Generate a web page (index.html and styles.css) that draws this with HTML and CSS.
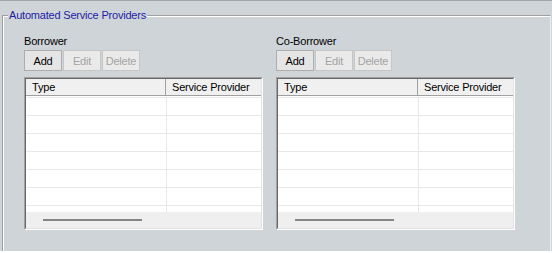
FILE: index.html
```html
<!DOCTYPE html>
<html>
<head>
<meta charset="utf-8">
<link rel="stylesheet" href="styles.css">
</head>
<body>
<div class="topline"></div>
<fieldset class="group">
  <legend class="group-title">Automated Service Providers</legend>
  <div class="panels">
    <section class="panel">
      <div class="label">Borrower</div>
      <div class="buttons">
        <button class="btn">Add</button>
        <button class="btn" disabled>Edit</button>
        <button class="btn" disabled>Delete</button>
      </div>
      <div class="grid">
        <div class="grid-inner">
          <div class="head"><div class="hc1">Type</div><div class="hc2">Service Provider</div></div>
          <div class="rows">
            <div class="row"><div class="c1"></div><div class="c2"></div></div>
            <div class="row"><div class="c1"></div><div class="c2"></div></div>
            <div class="row"><div class="c1"></div><div class="c2"></div></div>
            <div class="row"><div class="c1"></div><div class="c2"></div></div>
            <div class="row"><div class="c1"></div><div class="c2"></div></div>
            <div class="row"><div class="c1"></div><div class="c2"></div></div>
            <div class="row"><div class="c1"></div><div class="c2"></div></div>
          </div>
          <div class="hscroll"><div class="thumb"></div></div>
        </div>
      </div>
    </section>
    <section class="panel">
      <div class="label">Co-Borrower</div>
      <div class="buttons">
        <button class="btn">Add</button>
        <button class="btn" disabled>Edit</button>
        <button class="btn" disabled>Delete</button>
      </div>
      <div class="grid">
        <div class="grid-inner">
          <div class="head"><div class="hc1">Type</div><div class="hc2">Service Provider</div></div>
          <div class="rows">
            <div class="row"><div class="c1"></div><div class="c2"></div></div>
            <div class="row"><div class="c1"></div><div class="c2"></div></div>
            <div class="row"><div class="c1"></div><div class="c2"></div></div>
            <div class="row"><div class="c1"></div><div class="c2"></div></div>
            <div class="row"><div class="c1"></div><div class="c2"></div></div>
            <div class="row"><div class="c1"></div><div class="c2"></div></div>
            <div class="row"><div class="c1"></div><div class="c2"></div></div>
          </div>
          <div class="hscroll"><div class="thumb"></div></div>
        </div>
      </div>
    </section>
  </div>
</fieldset>
<div class="bottomstrip"></div>
</body>
</html>
```
FILE: styles.css
```css
html, body {
  margin: 0;
  padding: 0;
}
body {
  width: 552px;
  height: 253px;
  overflow: hidden;
  background: #cfd4d8;
  font-family: "Liberation Sans", Arial, sans-serif;
  font-size: 11px;
  letter-spacing: -0.2px;
  color: #000;
  display: flex;
  flex-direction: column;
}
.topline {
  flex: none;
  height: 1px;
  background: #a3a5a7;
}
.group {
  flex: 1;
  min-height: 0;
  margin: 8px 1px 0 2px;
  padding: 0;
  border: 1px solid #a0a0a0;
  border-right-color: #eceef0;
  border-bottom: none;
  box-shadow: inset 1px 1px 0 #ffffff;
  min-width: 0;
}
.group-title {
  margin-left: 5px;
  padding: 0 1px;
  line-height: 13px;
  color: #1c1ca6;
  background: #cfd4d8;
}
.panels {
  display: flex;
  gap: 13px;
  padding: 13px 0 0 21px;
}
.panel {
  width: 239px;
  display: flex;
  flex-direction: column;
}
.label {
  line-height: 13px;
  height: 13px;
}
.buttons {
  display: flex;
  gap: 1px;
  margin-top: 2px;
}
.btn {
  width: 38px;
  height: 21px;
  margin: 0;
  padding: 0;
  font: inherit;
  letter-spacing: inherit;
  color: #000;
  background: #e5e5e5;
  border: 1px solid #adadad;
  border-radius: 0;
}
.btn:disabled {
  color: #a3a3a3;
  background: #eaeaea;
  border-color: #c6c6c6;
}
.grid {
  margin-top: 6px;
  width: 239px;
  height: 153px;
  box-sizing: border-box;
  border: 1px solid;
  border-color: #a0a0a0 #ffffff #ffffff #a0a0a0;
}
.grid-inner {
  height: 100%;
  box-sizing: border-box;
  border: 1px solid;
  border-color: #696969 #e3e3e3 #e3e3e3 #696969;
  display: flex;
  flex-direction: column;
  background: #ffffff;
}
.head {
  flex: none;
  display: flex;
  height: 16px;
  background: #f0f0f0;
  border-bottom: 1px solid #a0a0a0;
  line-height: 16px;
}
.hc1 {
  width: 133px;
  padding-left: 6px;
  border-right: 1px solid #a0a0a0;
}
.hc2 {
  flex: 1;
  padding-left: 6px;
  white-space: nowrap;
  overflow: hidden;
}
.rows {
  flex: 1;
  min-height: 0;
  overflow: hidden;
  padding-top: 1px;
}
.row {
  display: flex;
  height: 17px;
  border-top: 1px solid #e8e8e8;
}
.c1 {
  width: 140px;
  border-right: 1px solid #e8e8e8;
}
.c2 {
  flex: 1;
}
.hscroll {
  flex: none;
  height: 16px;
  box-sizing: border-box;
  background: #efefef;
  padding: 7px 0 0 17px;
}
.thumb {
  width: 99px;
  height: 2px;
  background: #858585;
}
.bottomstrip {
  flex: none;
  height: 2px;
  background: #ffffff;
}
```
